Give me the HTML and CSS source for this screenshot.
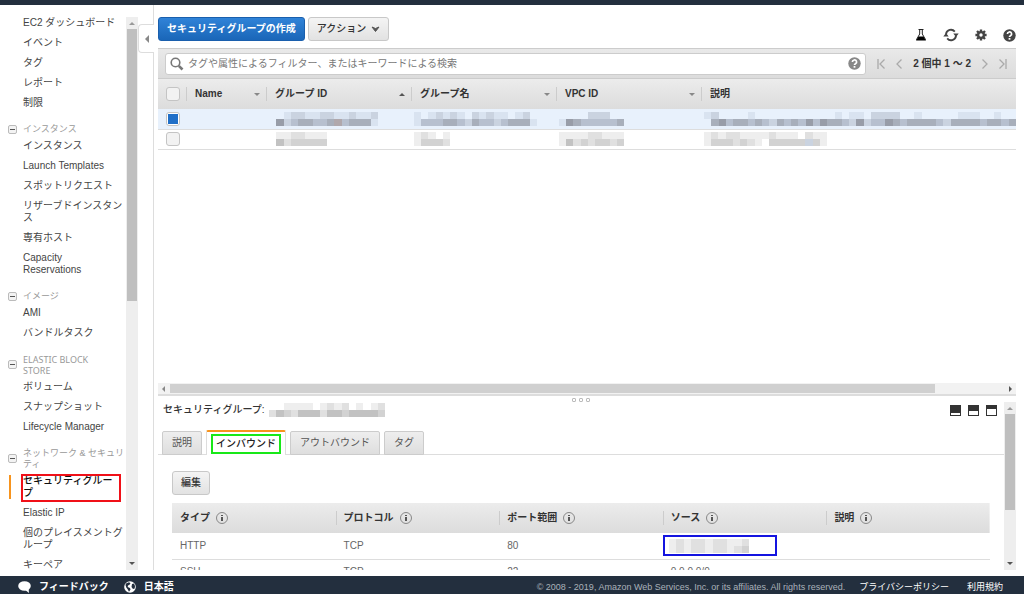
FILE: index.html
```html
<!DOCTYPE html>
<html lang="ja">
<head>
  <meta charset="UTF-8">
  <title>EC2 マネジメントコンソール</title>
  <meta name="viewport" content="width=device-width, initial-scale=1.0">
  <link rel="stylesheet" href="styles.css">
</head>
<body>
  <div class="topbar"></div>

  <div class="main">
    <div class="sidebar">
      <nav class="nav">
        <ul>
          <li><a href="#">EC2 ダッシュボード</a></li>
          <li><a href="#">イベント</a></li>
          <li><a href="#">タグ</a></li>
          <li><a href="#">レポート</a></li>
          <li><a href="#">制限</a></li>
        </ul>
        <h2><button class="fold" aria-label="折りたたむ"></button>インスタンス</h2>
        <ul>
          <li><a href="#">インスタンス</a></li>
          <li><a href="#">Launch Templates</a></li>
          <li><a href="#">スポットリクエスト</a></li>
          <li><a href="#">リザーブドインスタンス</a></li>
          <li><a href="#">専有ホスト</a></li>
          <li><a href="#">Capacity<br>Reservations</a></li>
        </ul>
        <h2><button class="fold" aria-label="折りたたむ"></button>イメージ</h2>
        <ul>
          <li><a href="#">AMI</a></li>
          <li><a href="#">バンドルタスク</a></li>
        </ul>
        <h2 class="latin"><button class="fold" aria-label="折りたたむ"></button>ELASTIC BLOCK<br>STORE</h2>
        <ul>
          <li><a href="#">ボリューム</a></li>
          <li><a href="#">スナップショット</a></li>
          <li><a href="#">Lifecycle Manager</a></li>
        </ul>
        <h2><button class="fold" aria-label="折りたたむ"></button>ネットワーク &amp; セキュリティ</h2>
        <ul>
          <li class="selected"><a href="#">セキュリティグルー<br>プ</a></li>
          <li><a href="#">Elastic IP</a></li>
          <li><a href="#">個のプレイスメントグループ</a></li>
          <li><a href="#">キーペア</a></li>
        </ul>
      </nav>
      <div class="vscroll nav-scroll">
        <span class="arrow up"></span>
        <span class="thumb"></span>
        <span class="arrow down"></span>
      </div>
    </div>

    <div class="divider">
      <button class="collapse" aria-label="メニューを閉じる"><span class="arrow left"></span></button>
    </div>

    <div class="content">
      <div class="toolbar">
        <button class="btn primary">セキュリティグループの作成</button>
        <button class="btn">アクション
          <svg width="9" height="7" viewBox="0 0 9 7"><path d="M1 1l3.500 4.500L8 1 4.500 2.500z" fill="#555" stroke="#555" stroke-linejoin="round"/></svg>
        </button>
        <div class="tools">
          <button class="icon" aria-label="実験">
            <svg width="12" height="12" viewBox="0 0 12 12"><path d="M3.500.5h5M4.700 1v4L1.500 10.500h9L7.300 5V1" fill="none" stroke="#222"/><path d="M3.600 7.500h4.800l2.600 4H1z" fill="#000"/></svg>
          </button>
          <button class="icon" aria-label="更新">
            <svg width="16" height="14" viewBox="0 0 16 14"><path d="M3 6a5 5 0 0 1 8.800-2.400M13 8a5 5 0 0 1-8.800 2.400" fill="none" stroke="#444" stroke-width="1.800"/><path d="M10.300 5.500h5.400L13 9zM.300 8.500h5.400L3 5z" fill="#444"/></svg>
          </button>
          <button class="icon" aria-label="設定">
            <svg width="12" height="12" viewBox="0 0 12 12"><g stroke="#444" stroke-width="2.400"><path d="M6 .4v11.200M.4 6h11.200M2 2l8 8M10 2l-8 8"/></g><circle cx="6" cy="6" r="4" fill="#444"/><circle cx="6" cy="6" r="1.700" fill="#fff"/></svg>
          </button>
          <button class="icon" aria-label="ヘルプ">
            <svg width="13" height="13" viewBox="0 0 13 13"><circle cx="6.500" cy="6.500" r="6.200" fill="#444"/><path d="M4.400 5a2.100 2 0 1 1 3.100 1.700c-.8.500-1 .7-1 1.300" fill="none" stroke="#fff" stroke-width="1.700"/><path d="M5.600 9h1.800v1.700H5.600z" fill="#fff"/></svg>
          </button>
        </div>
      </div>

      <div class="filterbar">
        <label class="search">
          <svg width="14" height="14" viewBox="0 0 14 14"><circle cx="5.500" cy="5.500" r="4.300" fill="none" stroke="#777" stroke-width="1.600"/><path d="M8.800 8.800l3.700 3.700" stroke="#777" stroke-width="2.600"/></svg>
          <input type="text" aria-label="フィルター" placeholder="タグや属性によるフィルター、またはキーワードによる検索">
          <svg width="13" height="13" viewBox="0 0 13 13"><circle cx="6.500" cy="6.500" r="6.200" fill="#888"/><path d="M4.400 5a2.100 2 0 1 1 3.100 1.700c-.8.500-1 .7-1 1.300" fill="none" stroke="#fff" stroke-width="1.700"/><path d="M5.600 9h1.800v1.700H5.600z" fill="#fff"/></svg>
        </label>
        <div class="pager">
          <button class="icon" aria-label="最初"><svg width="8" height="10" viewBox="0 0 8 10"><path d="M1 0v10M7.500.5L3 5l4.500 4.500" fill="none" stroke="#aaa" stroke-width="1.300"/></svg></button>
          <button class="icon" aria-label="前へ"><svg width="6" height="10" viewBox="0 0 6 10"><path d="M5.500.5L1 5l4.500 4.500" fill="none" stroke="#aaa" stroke-width="1.300"/></svg></button>
          <span class="count">2 個中 1 ～ 2</span>
          <button class="icon" aria-label="次へ"><svg width="6" height="10" viewBox="0 0 6 10"><path d="M.5.5L5 5 .5 9.500" fill="none" stroke="#aaa" stroke-width="1.300"/></svg></button>
          <button class="icon" aria-label="最後"><svg width="8" height="10" viewBox="0 0 8 10"><path d="M7 0v10M.5.5L5 5 .5 9.500" fill="none" stroke="#aaa" stroke-width="1.300"/></svg></button>
        </div>
      </div>

      <div class="list">
        <table class="groups">
          <colgroup>
            <col class="c-check"><col class="c-name"><col class="c-data"><col class="c-data"><col class="c-data"><col>
          </colgroup>
          <thead>
            <tr>
              <th><input type="checkbox" aria-label="すべて選択"></th>
              <th><div class="head">Name<span class="arrow down"></span></div></th>
              <th><div class="head">グループ ID<span class="arrow up"></span></div></th>
              <th><div class="head">グループ名<span class="arrow down"></span></div></th>
              <th><div class="head">VPC ID<span class="arrow down"></span></div></th>
              <th><div class="head">説明</div></th>
            </tr>
          </thead>
          <tbody>
            <tr class="active">
              <td><input type="checkbox" aria-label="行を選択" checked></td>
              <td></td>
              <td><svg class="mosaic" data-top="..eddeeddeedeed" data-bottom=".adcbbccbfcbbbe"></svg></td>
              <td><svg class="mosaic" data-top="e.edede.dedee.ed." data-bottom="ecccbbcdbccdcbbbe"></svg></td>
              <td><svg class="mosaic" data-top="....ddd.." data-bottom="eabcccccb"></svg></td>
              <td><svg class="mosaic" data-top="ed....e...........e.ee.dddd..e.....eee..e.." data-bottom=".bacbbcbcdbcbcacabbcdadccabcbbbbcdbbbbcbbcb"></svg></td>
            </tr>
            <tr>
              <td><input type="checkbox" aria-label="行を選択"></td>
              <td></td>
              <td><svg class="mosaic" data-top=".kkjjkkk" data-bottom=".hjiiiii"></svg></td>
              <td><svg class="mosaic" data-top="kjk.k" data-bottom="kiiij"></svg></td>
              <td><svg class="mosaic" data-top="kkkkjjkkk" data-bottom="khjijiiji"></svg></td>
              <td><svg class="mosaic" data-top="kjkjjkkkkjkkk.jkk" data-bottom="kiiijijk.iiiiidik"></svg></td>
            </tr>
          </tbody>
        </table>
      </div>

      <div class="hscroll">
        <span class="arrow left"></span>
        <span class="thumb"></span>
        <span class="arrow right"></span>
      </div>

      <div class="details">
        <div class="details-body">
          <div class="grip"><i></i><i></i><i></i></div>
          <div class="details-title">
            <span class="name">セキュリティグループ:</span>
            <svg class="mosaic" data-top="..kkkk.kjkj.k.kj" data-bottom="jhijhhhjhhihhhhi"></svg>
            <div class="layouts">
              <button class="icon" aria-label="最小表示"><svg width="11" height="11" viewBox="0 0 11 11"><path d="M0 0h11v11H0z" fill="#333"/><path d="M1 8h9v2H1z" fill="#fff"/></svg></button>
              <button class="icon" aria-label="分割表示"><svg width="11" height="11" viewBox="0 0 11 11"><path d="M0 0h11v11H0z" fill="#333"/><path d="M1 6h9v4H1z" fill="#fff"/></svg></button>
              <button class="icon" aria-label="最大表示"><svg width="11" height="11" viewBox="0 0 11 11"><path d="M0 0h11v11H0z" fill="#333"/><path d="M1 4h9v6H1z" fill="#fff"/></svg></button>
            </div>
          </div>
          <div class="tabs">
            <button class="tab">説明</button>
            <button class="tab current"><span class="mark-green">インバウンド</span></button>
            <button class="tab">アウトバウンド</button>
            <button class="tab">タグ</button>
          </div>
          <div class="panel">
            <button class="btn edit">編集</button>
            <table class="rules">
              <thead>
                <tr>
                  <th><div class="head">タイプ<span class="info"></span></div></th>
                  <th><div class="head">プロトコル<span class="info"></span></div></th>
                  <th><div class="head">ポート範囲<span class="info"></span></div></th>
                  <th><div class="head">ソース<span class="info"></span></div></th>
                  <th><div class="head">説明<span class="info"></span></div></th>
                </tr>
              </thead>
              <tbody>
                <tr>
                  <td>HTTP</td>
                  <td>TCP</td>
                  <td>80</td>
                  <td class="source"><div class="mark-blue"><svg class="mosaic" data-top="kjkjjkjjkkj" data-bottom="kjkjjkjjkji"></svg></div></td>
                  <td></td>
                </tr>
                <tr>
                  <td>SSH</td>
                  <td>TCP</td>
                  <td>22</td>
                  <td>0.0.0.0/0</td>
                  <td></td>
                </tr>
              </tbody>
            </table>
          </div>
        </div>
        <div class="vscroll details-scroll">
          <span class="arrow up"></span>
          <span class="thumb"></span>
          <span class="arrow down"></span>
        </div>
      </div>
    </div>
  </div>

  <footer class="footer">
    <a class="strong" href="#">
      <svg width="13" height="12" viewBox="0 0 13 12"><ellipse cx="6.500" cy="5" rx="6.300" ry="4.800" fill="#fff"/><path d="M6 8l5 4-.5-5z" fill="#fff"/></svg>
      フィードバック
    </a>
    <a class="strong" href="#">
      <svg width="12" height="12" viewBox="0 0 12 12"><circle cx="6" cy="6" r="5.800" fill="#fff"/><path d="M2 2.500l3-1.300 1.500 1-1 1.600-1.500.7-.3 1.500 2.300 1 .5 1.500-1.500 2.300-1.200-2.200L2.300 6.500 1.500 4zM8 3l2-.5 1 2.500-.3 2.500-1.700.5-1.500-2z" fill="#232f3e"/></svg>
      日本語
    </a>
    <span class="copy">© 2008 - 2019, Amazon Web Services, Inc. or its affiliates. All rights reserved.</span>
    <a href="#">プライバシーポリシー</a>
    <a href="#">利用規約</a>
  </footer>

  <script src="script.js"></script>
</body>
</html>
```
FILE: styles.css
```css
:root {
  --navy: #232f3e;
  --text: #444;
  --line: #ddd;
  --orange: #f7941e;
}

* {
  box-sizing: border-box;
}

body {
  margin: 0;
  height: 100vh;
  display: flex;
  flex-direction: column;
  overflow: hidden;
  background: #fff;
  color: var(--text);
  font-family: "Liberation Sans", "Noto Sans CJK JP", sans-serif;
  font-size: 10px;
  line-height: 12px;
}

a {
  color: inherit;
  text-decoration: none;
}

button, input {
  font: inherit;
  color: inherit;
  margin: 0;
}

ul {
  list-style: none;
  margin: 0;
  padding: 0;
}

svg {
  display: block;
  flex: none;
}

.topbar {
  height: 5px;
  flex: none;
  background: var(--navy);
}

.main {
  flex: 1;
  min-height: 0;
  display: flex;
  padding: 0 8px 6px 0;
}

/* 左メニュー */
.sidebar {
  flex: none;
  width: 138px;
  display: flex;
}

.nav {
  flex: 1;
  overflow: hidden;
  padding: 8px 0 0 23px;
}

.nav li {
  position: relative;
  padding: 4px 0;
}

.nav li a {
  display: block;
}

.nav h2 {
  position: relative;
  margin: 0;
  padding: 11px 0 1px;
  font-size: 9px;
  font-weight: normal;
  line-height: 11px;
  color: #999;
}

.nav h2.latin {
  font-family: "Noto Sans", sans-serif;
}

.fold {
  position: absolute;
  left: -15px;
  top: 50%;
  width: 9px;
  height: 9px;
  padding: 0;
  border: 1px solid #bbb;
  border-radius: 2px;
  background: linear-gradient(#555, #555) center / 5px 1px no-repeat #f3f3f3;
}

.nav .selected {
  font-weight: 500;
  color: #111;
}

.nav .selected::before {
  content: "";
  position: absolute;
  left: -14px;
  top: 4px;
  bottom: 4px;
  width: 2px;
  background: var(--orange);
}

.nav .selected::after {
  content: "";
  position: absolute;
  left: -2px;
  right: 5px;
  top: 3px;
  bottom: 1px;
  border: 2px solid #f01018;
}

/* 矢印とスクロールバー */
.arrow {
  flex: none;
  width: 0;
  height: 0;
  border: 3px solid transparent;
}

.arrow.up { border-top: 0; border-bottom-color: #555; }
.arrow.down { border-bottom: 0; border-top-color: #555; }
.arrow.left { border-left: 0; border-right-color: #888; }
.arrow.right { border-right: 0; border-left-color: #555; }

.vscroll {
  flex: none;
  width: 12px;
  display: flex;
  flex-direction: column;
  align-items: center;
  padding: 5px 0;
  background: #eee;
}

.vscroll .arrow.up { border-bottom-color: #999; }

.vscroll .thumb {
  width: 10px;
  margin: 4px 0 auto;
  background: #bfbfbf;
}

.nav-scroll { margin-top: 12px; }
.nav-scroll .thumb { height: 50%; }
.details-scroll { margin-top: 6px; }
.details-scroll .thumb { height: 61%; }

.hscroll {
  flex: none;
  height: 13px;
  display: flex;
  align-items: center;
  padding: 0 4px;
  background: #f2f2f2;
  border-bottom: 2px solid var(--line);
}

.hscroll .thumb {
  width: 90%;
  height: 9px;
  margin: 0 auto 0 5px;
  background: #d0d0d0;
}

.divider {
  flex: none;
  width: 16px;
  padding-top: 19px;
  background: linear-gradient(var(--line), var(--line)) right / 1px 100% no-repeat;
}

.collapse {
  display: flex;
  align-items: center;
  justify-content: center;
  width: 16px;
  height: 29px;
  padding: 0;
  border: 1px solid var(--line);
  border-right: 0;
  border-radius: 4px 0 0 4px;
  background: #fff;
}

.collapse .arrow {
  border-width: 4px;
  border-left: 0;
}

/* コンテンツ */
.content {
  flex: 1;
  min-width: 0;
  display: flex;
  flex-direction: column;
  margin-left: 4px;
}

.toolbar {
  flex: none;
  display: flex;
  gap: 3px;
  padding: 12px 0 6px;
}

.btn {
  display: flex;
  align-items: center;
  gap: 5px;
  height: 24px;
  padding: 0 8px;
  border: 1px solid #c8c8c8;
  border-radius: 3px;
  background: linear-gradient(#f4f4f4, #e2e2e2);
  color: #333;
  font-weight: 500;
}

.btn.primary {
  border-color: #1a5fad;
  background: linear-gradient(#3083d8, #1a66b8);
  color: #fff;
  font-weight: bold;
}

.tools {
  display: flex;
  align-items: center;
  gap: 16px;
  margin-left: auto;
  padding-top: 11px;
}

.icon {
  padding: 0;
  border: 0;
  background: none;
}

.filterbar {
  flex: none;
  display: flex;
  align-items: center;
  height: 31px;
  padding: 0 9px 0 7px;
  border-top: 1px solid #ccc;
  border-bottom: 1px solid #ccc;
  background: linear-gradient(#e9e9e9, #dcdcdc);
}

.search {
  flex: 1;
  display: flex;
  align-items: center;
  gap: 4px;
  height: 22px;
  padding: 0 4px;
  border: 1px solid #ccc;
  border-radius: 3px;
  background: #fff;
}

.search input {
  flex: 1;
  min-width: 0;
  padding: 0;
  border: 0;
  outline: 0;
  background: none;
}

.search input::placeholder {
  color: #777;
}

.pager {
  display: flex;
  align-items: center;
  gap: 11px;
  margin-left: 11px;
}

.count {
  font-weight: bold;
  color: #333;
}

.list {
  flex: 1;
  min-height: 0;
  overflow: hidden;
}

table {
  width: 100%;
  border-collapse: collapse;
  table-layout: fixed;
}

th, td {
  padding: 0;
  text-align: left;
}

thead tr {
  height: 30px;
  background: linear-gradient(#ececec, #dcdcdc);
}

th {
  color: #333;
}

.c-check { width: 28px; }
.c-name { width: 80px; }
.c-data { width: 145px; }

.head {
  display: flex;
  align-items: center;
  height: 14px;
  padding: 0 6px 0 8px;
  border-left: 1px solid #ccc;
}

.head .arrow {
  margin-left: auto;
}

.head .arrow.down {
  border-top-color: #888;
}

.groups td {
  height: 20px;
  border-bottom: 1px solid var(--line);
}

.groups td .mosaic {
  margin-left: 3px;
}

.groups .active td {
  background: #e8f1fc;
}

.groups input {
  appearance: none;
  display: block;
  width: 14px;
  height: 14px;
  margin-left: 8px;
  border: 1px solid #c4c4c4;
  border-radius: 3px;
  background: #f2f2f2;
}

.groups input:checked {
  background: linear-gradient(#1f6fc8, #1f6fc8) center / 10px 10px no-repeat #fff;
}

/* 詳細 */
.details {
  flex: none;
  height: 174px;
  display: flex;
}

.details-body {
  flex: 1;
  min-width: 0;
  overflow: hidden;
}

.grip {
  display: flex;
  justify-content: center;
  gap: 3px;
  padding-top: 2px;
}

.grip i {
  width: 4px;
  height: 4px;
  border: 1px solid #bbb;
  border-radius: 1px;
}

.details-title {
  display: flex;
  align-items: center;
  gap: 4px;
  height: 16px;
  padding: 0 7px 0 5px;
}

.details-title .name {
  color: #333;
  font-weight: 500;
}

.layouts {
  display: flex;
  gap: 7px;
  margin-left: auto;
}

.tabs {
  display: flex;
  align-items: flex-end;
  gap: 4px;
  height: 37px;
  padding: 0 4px;
  box-shadow: inset 0 -1px var(--line);
}

.tab {
  height: 24px;
  padding: 0 9px;
  border: 1px solid #ccc;
  border-radius: 2px 2px 0 0;
  background: linear-gradient(#eee, #dedede);
  color: #555;
}

.tab.current {
  height: 25px;
  padding: 0 4px;
  border-color: var(--line);
  border-top: 2px solid var(--orange);
  border-bottom: 0;
  background: #fff;
  color: #222;
  font-weight: 500;
}

.mark-green {
  display: block;
  padding: 2px 3px;
  border: 2px solid #18e818;
}

.panel {
  padding: 16px 14px 0;
}

.edit {
  margin-bottom: 8px;
}

.rules .head {
  gap: 6px;
  padding: 0 7px;
}

.rules th:first-child .head {
  border-left-color: transparent;
}

.info {
  width: 12px;
  height: 12px;
  border: 1px solid #888;
  border-radius: 6px;
  background:
    linear-gradient(#555, #555) 4px 2px / 2px 1px no-repeat,
    linear-gradient(#555, #555) 4px 4px / 2px 4px no-repeat;
}

.rules td {
  height: 26px;
  padding-left: 8px;
  border-bottom: 1px solid var(--line);
  color: #666;
}

.rules td.source {
  padding-left: 0;
}

.mark-blue {
  width: 70%;
  height: 21px;
  padding: 2px 4px;
  border: 2px solid #1414e0;
}

/* フッター */
.footer {
  flex: none;
  display: flex;
  align-items: center;
  height: 18px;
  padding: 3px 21px 0 18px;
  background: var(--navy);
  color: #fff;
  font-size: 9px;
}

.footer a {
  display: flex;
  align-items: center;
  gap: 8px;
  margin-right: 18px;
}

.footer a:last-child {
  margin-right: 0;
}

.footer .strong {
  margin-right: 15px;
  font-size: 10px;
  font-weight: bold;
}

.copy {
  margin: 0 14px 0 auto;
  color: #aab1b9;
}
```
FILE: script.js
```js
// 伏せ字のモザイクを描く
const colors = {
  a: "#989da8", b: "#a8afbb", c: "#b7c0cf", d: "#cad3e0", e: "#d9e3f0",
  f: "#b0a8ac", h: "#c2c2c2", i: "#d2d2d2", j: "#e0e0e0", k: "#eeeeee"
};

document.querySelectorAll(".mosaic").forEach(svg => {
  const rows = [svg.dataset.top, svg.dataset.bottom];
  const cols = rows[1].length;
  let html = "";
  rows.forEach((row, y) => {
    [...row].forEach((c, x) => {
      if (colors[c]) {
        html += `<rect x="${x}" y="${y}" width="1" height="1" fill="${colors[c]}"/>`;
      }
    });
  });
  svg.setAttribute("viewBox", `0 0 ${cols} 2`);
  svg.setAttribute("preserveAspectRatio", "none");
  svg.setAttribute("shape-rendering", "crispEdges");
  svg.setAttribute("width", Math.round(cols * 7.25));
  svg.setAttribute("height", 14);
  svg.innerHTML = html;
});
```
